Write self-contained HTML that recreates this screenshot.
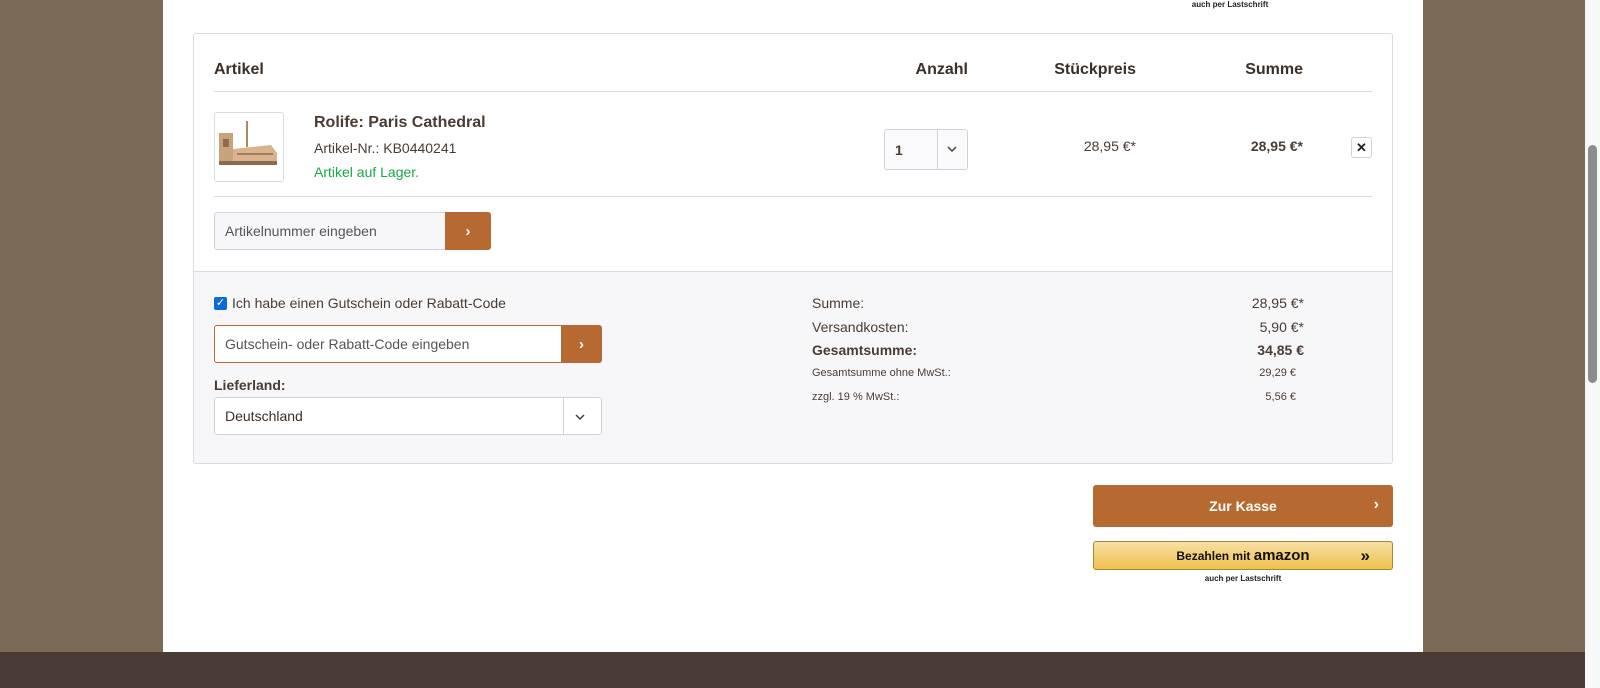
<!DOCTYPE html>
<html><head><meta charset="utf-8"><style>
*{box-sizing:border-box;margin:0;padding:0}
body{width:1600px;height:688px;overflow:hidden;background:#7b6a58;font-family:"Liberation Sans",sans-serif;color:#4a3c34;position:relative;font-size:14px}
.abs{position:absolute}
.main{left:163px;top:0;width:1260px;height:652px;background:#fff}
.footer{left:0;top:652px;width:1585px;height:36px;background:#4a3c34}
.sb{left:1585px;top:0;width:15px;height:688px;background:#f8f8f8}
.thumb{left:1588px;top:145px;width:9px;height:238px;background:#8c8c8c;border-radius:5px}
.card{left:193px;top:33px;width:1200px;height:431px;border:1px solid #dadae5;border-radius:3px;overflow:hidden}
.gray{left:0;top:237px;width:1198px;height:193px;background:#f7f7fa;border-top:1px solid #dadae5}
.line{height:1px;background:#dadae5}
.b{font-weight:bold}
.inp{border:1px solid #d1d1dc;border-radius:3px;background:#f7f7fa;font-size:14px;color:#555;padding-left:10px;display:flex;align-items:center}
.btn{background:#b66a31;color:#fff;display:flex;align-items:center;justify-content:center;border-radius:0 3px 3px 0;font-size:15px;font-weight:bold}
.r{text-align:right}
</style></head><body>
<div class="abs main"></div>
<div class="abs" style="left:1180px;top:0;width:100px;text-align:center;font-size:8px;font-weight:bold;color:#222">auch per Lastschrift</div>
<div class="abs card">
 <div class="abs b" style="left:20px;top:27px;font-size:16px;color:#3b2f28">Artikel</div>
 <div class="abs b r" style="left:674px;top:27px;width:100px;font-size:16px;color:#3b2f28">Anzahl</div>
 <div class="abs b r" style="left:842px;top:27px;width:100px;font-size:16px;color:#3b2f28">Stückpreis</div>
 <div class="abs b r" style="left:1009px;top:27px;width:100px;font-size:16px;color:#3b2f28">Summe</div>
 <div class="abs line" style="left:20px;top:57px;width:1158px"></div>
 <div class="abs" style="left:20px;top:78px;width:70px;height:70px;border:1px solid #dadae5;border-radius:3px;background:#fff">
  <svg width="68" height="68" viewBox="0 0 68 68"><rect x="4" y="20" width="14" height="30" fill="#c9a27a"/><path d="M18 36 L56 32 L62 40 L62 50 L18 50Z" fill="#d8b48e"/><rect x="31" y="8" width="2" height="26" fill="#b08560"/><rect x="4" y="48" width="58" height="4" fill="#8c6a50"/><rect x="8" y="26" width="6" height="8" fill="#8e6b4f"/><rect x="22" y="40" width="36" height="2" fill="#a57c58"/></svg>
 </div>
 <div class="abs b" style="left:120px;top:80px;font-size:16px;color:#4a3c34">Rolife: Paris Cathedral</div>
 <div class="abs" style="left:120px;top:106px;font-size:14px">Artikel-Nr.: KB0440241</div>
 <div class="abs" style="left:120px;top:130px;font-size:14px;color:#1aa745">Artikel auf Lager.</div>
 <div class="abs" style="left:690px;top:95px;width:84px;height:41px;border:1px solid #d1d1dc;border-radius:3px;background:#fafafc">
  <div class="abs b" style="left:10px;top:12px;font-size:14px">1</div>
  <div class="abs" style="left:52px;top:0;width:1px;height:39px;background:#d1d1dc"></div>
  <svg class="abs" style="left:62px;top:15px" width="10" height="8"><path d="M1 2l4 4 4-4" stroke="#4a3c34" stroke-width="1.5" fill="none"/></svg>
 </div>
 <div class="abs r" style="left:800px;top:104px;width:142px;font-size:14px">28,95 €*</div>
 <div class="abs r b" style="left:967px;top:104px;width:142px;font-size:14px">28,95 €*</div>
 <div class="abs" style="left:1157px;top:103px;width:21px;height:21px;border:1px solid #d1d1dc;border-radius:3px;text-align:center;line-height:19px;font-weight:bold;font-size:13px;color:#222">✕</div>
 <div class="abs line" style="left:20px;top:162px;width:1158px"></div>
 <div class="abs inp" style="left:20px;top:178px;width:240px;height:38px;border-radius:3px 0 0 3px">Artikelnummer eingeben</div>
 <div class="abs btn" style="left:251px;top:178px;width:46px;height:38px">›</div>
 <div class="abs gray">
  <div class="abs" style="left:20px;top:23px;font-size:14px;display:flex;align-items:center"><span style="display:inline-block;width:13px;height:13px;background:#0b6cd6;border-radius:2px;color:#fff;font-size:11px;line-height:13px;text-align:center;margin-right:5px">✓</span>Ich habe einen Gutschein oder Rabatt-Code</div>
  <div class="abs inp" style="left:20px;top:53px;width:360px;height:38px;border-color:#b66a31;background:#fff;border-radius:3px 0 0 3px">Gutschein- oder Rabatt-Code eingeben</div>
  <div class="abs btn" style="left:367px;top:53px;width:41px;height:38px">›</div>
  <div class="abs b" style="left:20px;top:105px;font-size:14px">Lieferland:</div>
  <div class="abs inp" style="left:20px;top:125px;width:388px;height:38px;background:#fff;color:#3b2f28">Deutschland
   <div class="abs" style="left:348px;top:0;width:1px;height:36px;background:#d1d1dc"></div>
   <svg class="abs" style="left:360px;top:15px" width="10" height="8"><path d="M1 2l4 4 4-4" stroke="#4a3c34" stroke-width="1.5" fill="none"/></svg>
  </div>
  <div class="abs" style="left:618px;top:23px;font-size:14px">Summe:</div>
  <div class="abs r" style="left:970px;top:23px;width:140px;font-size:14px">28,95 €*</div>
  <div class="abs" style="left:618px;top:47px;font-size:14px">Versandkosten:</div>
  <div class="abs r" style="left:970px;top:47px;width:140px;font-size:14px">5,90 €*</div>
  <div class="abs b" style="left:618px;top:70px;font-size:14px">Gesamtsumme:</div>
  <div class="abs r b" style="left:970px;top:70px;width:140px;font-size:14px">34,85 €</div>
  <div class="abs" style="left:618px;top:95px;font-size:11px">Gesamtsumme ohne MwSt.:</div>
  <div class="abs r" style="left:970px;top:95px;width:132px;font-size:11px">29,29 €</div>
  <div class="abs" style="left:618px;top:119px;font-size:11px">zzgl. 19 % MwSt.:</div>
  <div class="abs r" style="left:970px;top:119px;width:132px;font-size:11px">5,56 €</div>
 </div>
</div>
<div class="abs btn" style="left:1093px;top:485px;width:300px;height:42px;border-radius:3px;font-size:14px">Zur Kasse<span class="abs" style="right:14px;top:12px;font-size:16px;line-height:16px">›</span></div>
<div class="abs" style="left:1093px;top:541px;width:300px;height:29px;border:1px solid #a88734;border-radius:3px;background:linear-gradient(#f7dfa5,#f0c14b);display:flex;align-items:center;justify-content:center;font-size:12px;font-weight:bold;color:#111">Bezahlen mit&nbsp;<span style="font-size:15px">amazon</span><span class="abs" style="right:22px;top:5px;font-size:17px;line-height:17px">»</span></div>
<div class="abs" style="left:1193px;top:574px;width:100px;text-align:center;font-size:8px;font-weight:bold;color:#222">auch per Lastschrift</div>
<div class="abs footer"></div>
<div class="abs sb"></div>
<div class="abs thumb"></div>
</body></html>
